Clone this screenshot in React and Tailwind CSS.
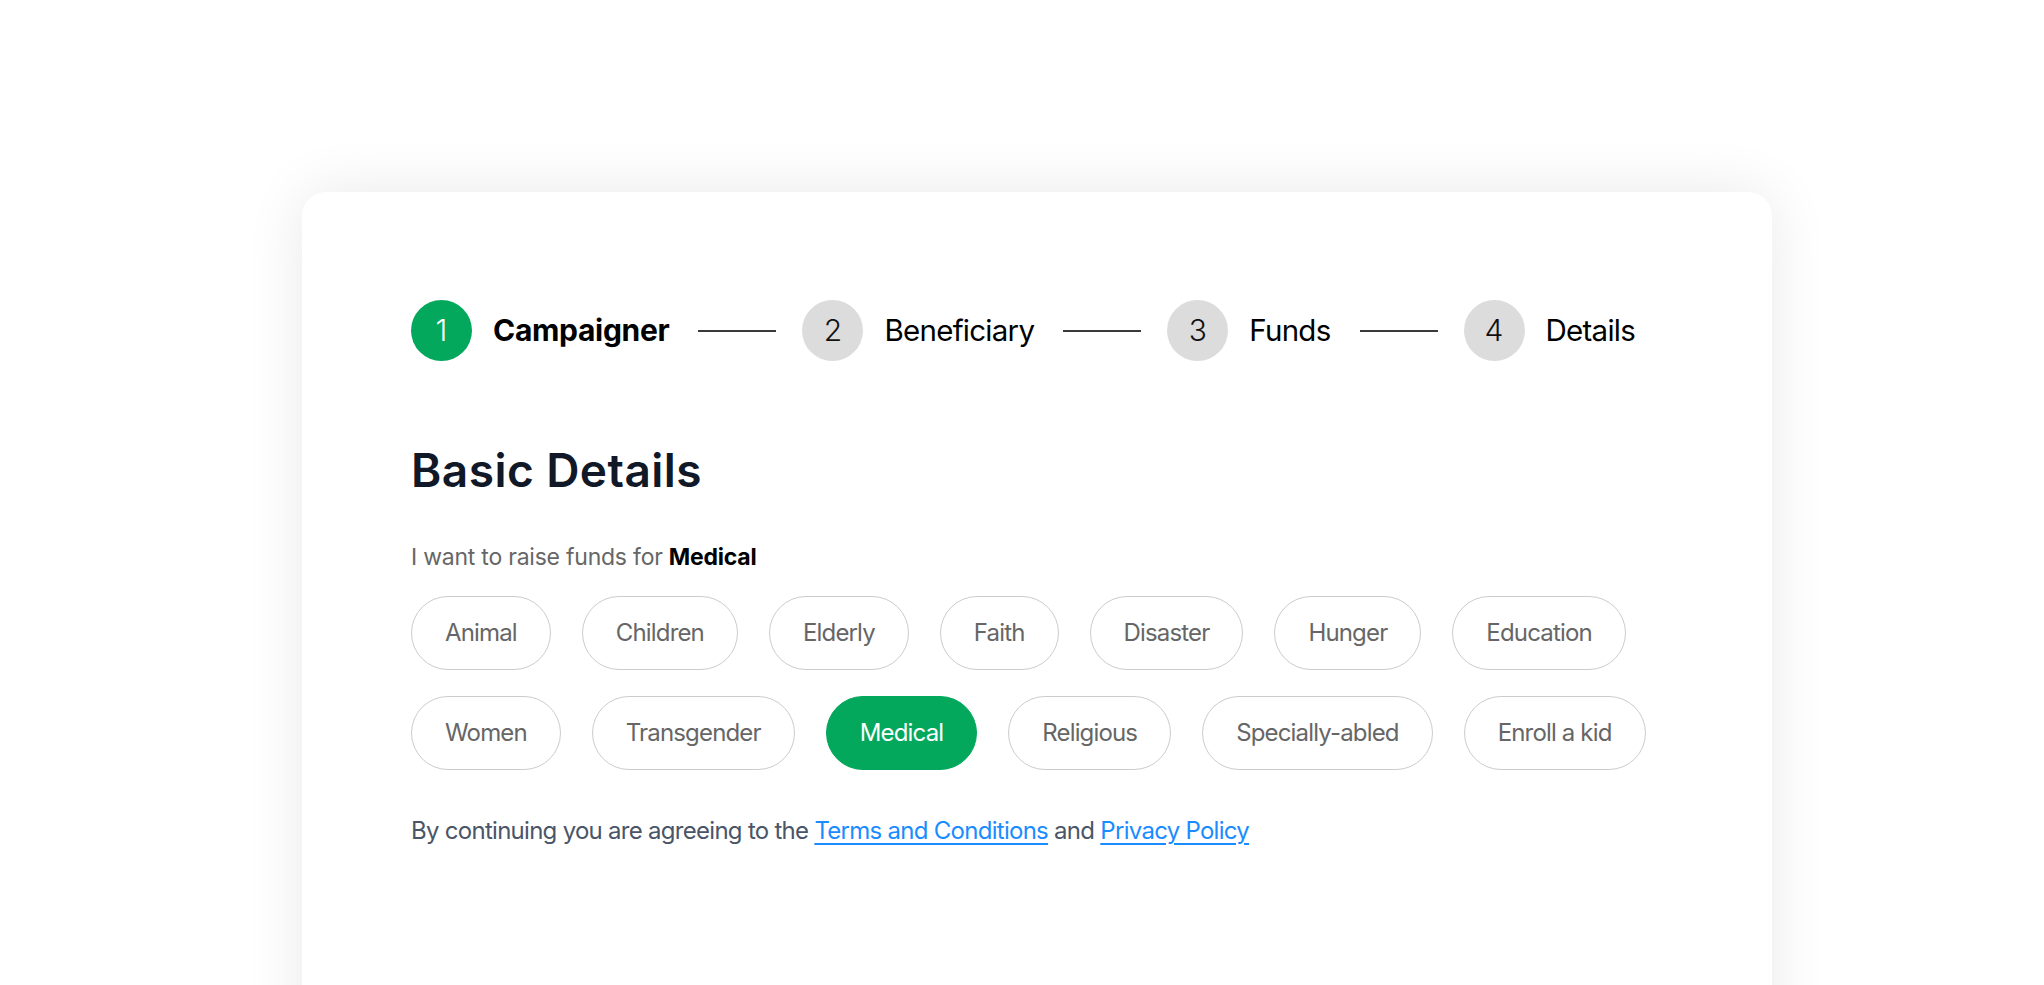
const steps = [
  { n: 1, label: "Campaigner", active: true },
  { n: 2, label: "Beneficiary" },
  { n: 3, label: "Funds" },
  { n: 4, label: "Details" },
];

const causes = [
  "Animal", "Children", "Elderly", "Faith", "Disaster", "Hunger", "Education",
  "Women", "Transgender", "Medical", "Religious", "Specially-abled", "Enroll a kid",
];

function Stepper() {
  return (
    <div className="flex items-center">
      {steps.map((s, i) => (
        <div key={s.n} className="flex items-center">
          {i > 0 && <div className="ml-[29px] mr-[26px] h-[2px] w-[78px] bg-[#3a3a3a]" />}
          <div
            className={
              s.active
                ? "flex h-[61px] w-[61px] items-center justify-center rounded-full bg-[#03a85c] text-[30px] font-light text-white"
                : "flex h-[61px] w-[61px] items-center justify-center rounded-full bg-[#dcdcdc] text-[30px] font-light text-[#111]"
            }
          >
            {s.n}
          </div>
          <span
            className={
              s.active
                ? "ml-[21px] text-[30px] font-bold tracking-[-0.01em] text-black"
                : "ml-[21px] text-[29.5px] font-normal tracking-[-0.025em] text-black"
            }
          >
            {s.label}
          </span>
        </div>
      ))}
    </div>
  );
}

export default function App() {
  const selected = "Medical";
  return (
    <div
      className="h-[985px] overflow-hidden bg-white pl-[302px] pt-[192px]"
      style={{ fontFamily: "Inter, 'Noto Sans', sans-serif" }}
    >
      <div className="h-[900px] w-[1470px] rounded-[24px] bg-white px-[109px] pt-[108px] shadow-[0_0_60px_rgba(0,0,0,0.09)]">
        <Stepper />
        <h1 className="mt-[86px] text-[46px] font-semibold leading-none tracking-[0.01em] text-[#111827]">Basic Details</h1>
        <p className="mt-[53px] text-[23px] leading-none tracking-[-0.01em] text-[#666]">
          I want to raise funds for <span className="font-bold text-black">{selected}</span>
        </p>
        <div className="mt-[27px] flex flex-wrap gap-x-[31px] gap-y-[26px]">
          {causes.map((c) =>
            c === selected ? (
              <button
                key={c}
                className="flex h-[74px] items-center rounded-full border-[1.5px] border-[#03a85c] bg-[#03a85c] px-[33px] text-[24px] tracking-[-0.035em] text-white"
              >
                {c}
              </button>
            ) : (
              <button
                key={c}
                className="flex h-[74px] items-center rounded-full border-[1.5px] border-[#cccccc] bg-white px-[33px] text-[24px] tracking-[-0.035em] text-[#666]"
              >
                {c}
              </button>
            )
          )}
        </div>
        <p className="mt-[49px] text-[24px] leading-none tracking-[-0.03em] text-[#4a5568]">
          By continuing you are agreeing to the{" "}
          <a className="text-[#1a8cff] underline underline-offset-4">Terms and Conditions</a> and{" "}
          <a className="text-[#1a8cff] underline underline-offset-4">Privacy Policy</a>
        </p>
      </div>
    </div>
  );
}
